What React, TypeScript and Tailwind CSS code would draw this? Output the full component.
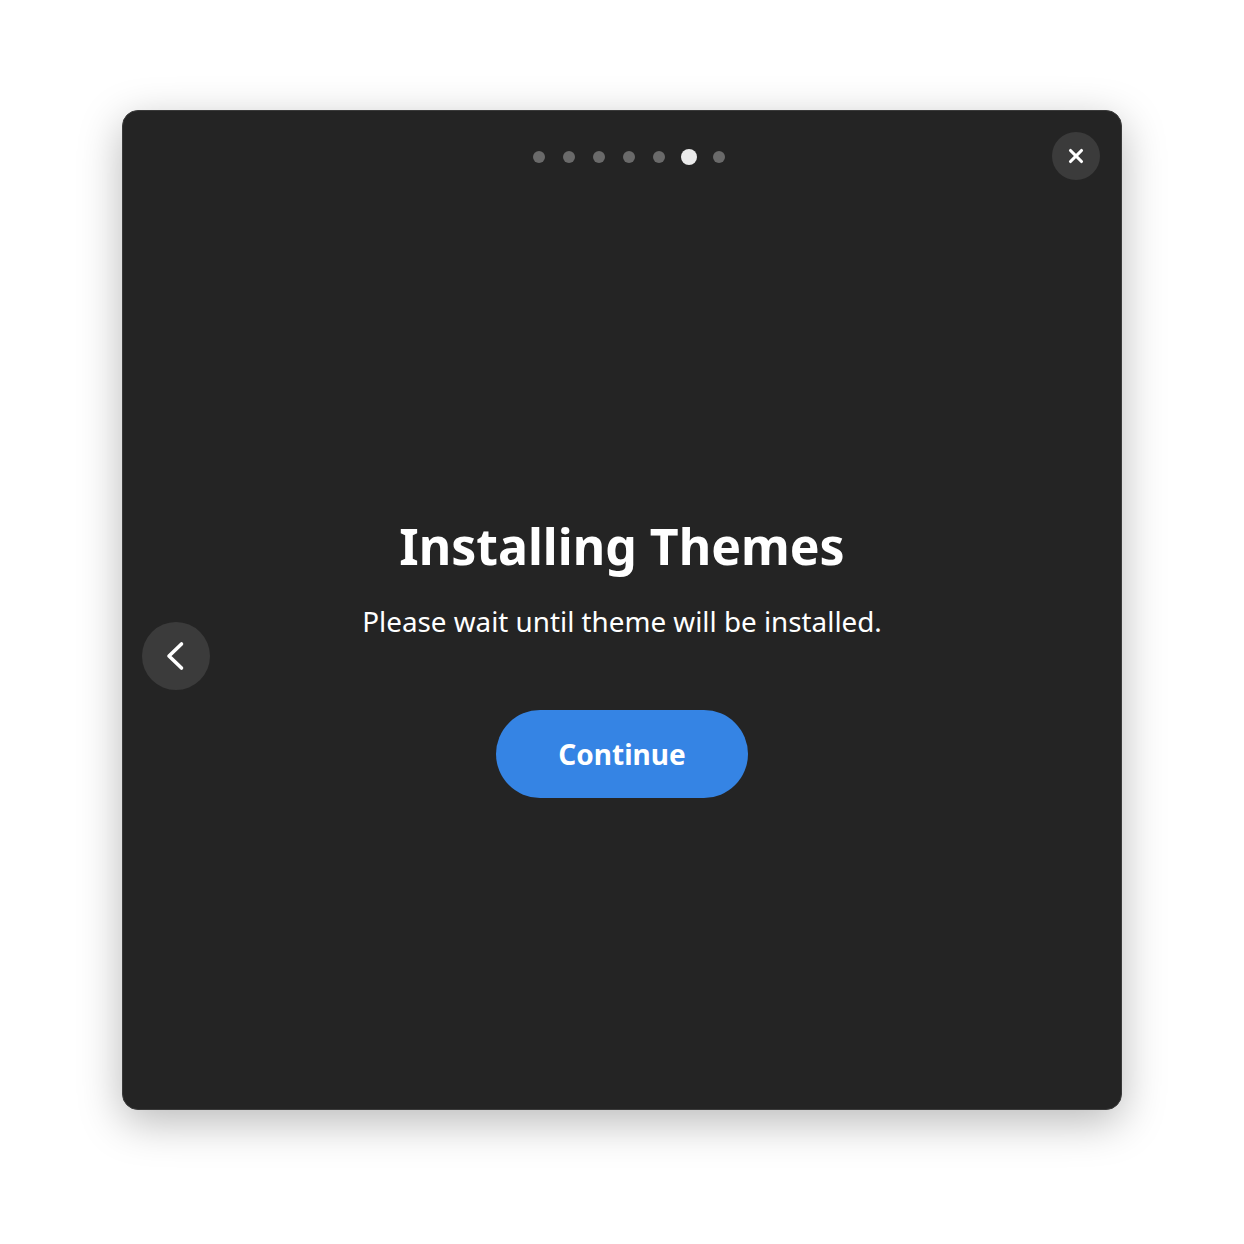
import { X } from "lucide-react";

const dots = [0, 1, 2, 3, 4, 5, 6];
const active = 5;

export default function App() {
	return (
		<div
			className="min-h-[1244px] bg-white pt-[110px]"
			style={{ fontFamily: '"Noto Sans", "Open Sans", sans-serif' }}>
			<div className="relative mx-auto w-[1000px] h-[1000px] rounded-[16px] bg-[#242424] border border-[#3a3a3a] shadow-[0_12px_44px_rgba(0,0,0,0.28)]">
				<div className="flex items-center justify-center pl-[14px] pt-[40px] h-[52px]">
					{dots.map((d) => (
						<span key={d} className="w-[30px] flex items-center justify-center">
							{d === active ? (
								<span className="w-[16px] h-[16px] rounded-full bg-[#ebebeb]" />
							) : (
								<span className="w-[12px] h-[12px] rounded-full bg-[#6a6a6a]" />
							)}
						</span>
					))}
				</div>

				<button className="absolute top-[21px] right-[21px] w-[48px] h-[48px] rounded-full bg-[#3b3b3b] flex items-center justify-center text-white">
					<X size={22} strokeWidth={3.4} />
				</button>

				<button className="absolute top-[511px] left-[19px] w-[68px] h-[68px] rounded-full bg-[#3b3b3b] flex items-center justify-center text-white">
					<svg width="24" height="32" viewBox="0 0 24 32" fill="none">
						<polyline
							points="17.5,4 5,16 17.5,28"
							stroke="currentColor"
							strokeWidth="3.6"
							strokeLinecap="round"
							strokeLinejoin="round"
						/>
					</svg>
				</button>

				<div className="flex flex-col items-center pt-[353px] text-white">
					<h1 className="text-[50px] leading-[60px] font-bold">Installing Themes</h1>
					<p className="mt-[27px] text-[27.8px] leading-[36px]">
						Please wait until theme will be installed.
					</p>
					<button className="mt-[71px] w-[252px] h-[88px] rounded-full bg-[#3584e4] text-[28px] font-bold text-white">
						Continue
					</button>
				</div>
			</div>
		</div>
	);
}
